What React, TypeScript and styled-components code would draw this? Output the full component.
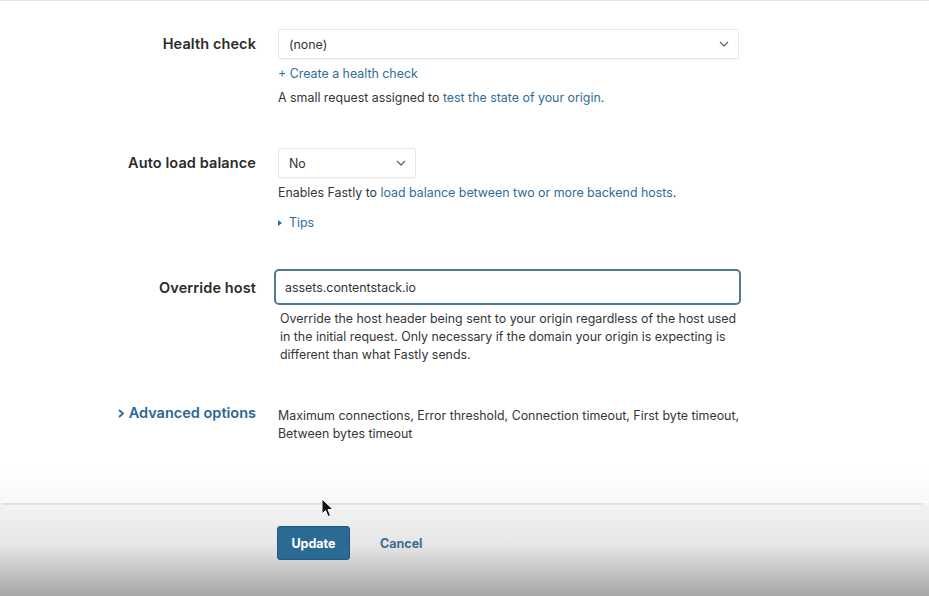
import React from "react";
import styled, { createGlobalStyle } from "styled-components";

const GlobalStyle = createGlobalStyle`
  html, body {
    margin: 0;
    padding: 0;
    background: #ffffff;
  }
  body {
    font-family: Inter, "Liberation Sans", Arial, sans-serif;
    color: #333;
  }
`;

const Page = styled.div`
    position: relative;
    width: 929px;
    height: 596px;
    overflow: hidden;
    display: flex;
    flex-direction: column;
    border-top: 1px solid #e4e4e4;
    box-sizing: border-box;
    background: linear-gradient(#ffffff 0%, #ffffff 78%, #f9f9f9 84%);
`;

const Form = styled.div`
    display: grid;
    grid-template-columns: 256px 462px;
    column-gap: 22px;
    padding-top: 28px;
    flex: 1;
    align-content: start;
`;

const Label = styled.div<{ $h: number }>`
    text-align: right;
    font-size: 14.5px;
    font-weight: 600;
    color: #2b2b2b;
    line-height: ${(p) => p.$h}px;
    letter-spacing: 0.1px;
`;

const Field = styled.div<{ $mb: number }>`
    display: flex;
    flex-direction: column;
    align-items: flex-start;
    margin-bottom: ${(p) => p.$mb}px;
`;

const Select = styled.div<{ $w: number }>`
    box-sizing: border-box;
    width: ${(p) => p.$w}px;
    height: 30px;
    border: 1px solid #e6e6e6;
    border-radius: 2px;
    background: #fff;
    display: flex;
    align-items: center;
    justify-content: space-between;
    padding: 0 9px 0 10px;
    font-size: 12.4px;
    color: #333;
    box-shadow: 0 1px 1px rgba(0, 0, 0, 0.03);
`;

const Input = styled.div`
    box-sizing: border-box;
    width: 467px;
    height: 36px;
    margin-left: -4px;
    border: 2px solid #4f7a96;
    border-radius: 5px;
    background: #fff;
    display: flex;
    align-items: center;
    padding: 1px 0 0 9px;
    font-size: 12.4px;
    color: #333;
`;

const Link = styled.span`
    color: #2f6c99;
`;

const Help = styled.div<{ $mt: number; $ml?: number }>`
    margin-top: ${(p) => p.$mt}px;
    margin-left: ${(p) => p.$ml ?? 0}px;
    font-size: 12.4px;
    line-height: 18px;
    color: #353535;
`;

const Toggle = styled.div<{ $mt: number }>`
    margin-top: ${(p) => p.$mt}px;
    font-size: 12.4px;
    line-height: 18px;
    color: #2f6c99;
    display: flex;
    align-items: center;
    gap: 7px;
`;

const AdvancedLabel = styled.div`
    align-self: start;
    font-size: 14.5px;
    font-weight: 600;
    color: #2a6792;
    line-height: 18px;
    margin-top: -2px;
    display: flex;
    justify-content: flex-end;
    align-items: center;
    gap: 5px;
`;

const FooterShade = styled.div`
    background: linear-gradient(#f3f3f3 0%, #e6e6e6 45%, #c4c4c4 75%, #a6a6a6 100%);
`;

const Footer = styled.div`
    box-sizing: border-box;
    height: 93px;
    margin: 0 7px 0 2px;
    border-top: 2px solid #e2e2e2;
    display: flex;
    align-items: flex-start;
    padding: 21px 0 0 275px;
    gap: 30px;
`;

const PrimaryButton = styled.button`
    height: 34px;
    width: 73px;
    padding: 0;
    border: 1px solid #1f5a80;
    border-radius: 3px;
    background: #2b6a93;
    color: #fff;
    font-family: inherit;
    font-size: 12.5px;
    font-weight: 700;
`;

const TextButton = styled.button`
    height: 34px;
    padding: 0;
    border: none;
    background: transparent;
    color: #3b6d92;
    font-family: inherit;
    font-size: 12.5px;
    font-weight: 700;
`;

const Cursor = styled.svg`
    position: absolute;
    left: 321px;
    top: 497px;
`;

const Chevron = () => (
  <svg width="10" height="6" viewBox="0 0 10 6">
    <path d="M1 1 L5 5 L9 1" fill="none" stroke="#666" strokeWidth="1.3" />
  </svg>
);

const App: React.FC = () => (
  <>
    <GlobalStyle />
    <Page>
      <Form>
        <Label $h={30}>Health check</Label>
        <Field $mb={41}>
          <Select $w={461}>
            (none)
            <Chevron />
          </Select>
          <Help $mt={6}>
            <Link>+ Create a health check</Link>
          </Help>
          <Help $mt={6}>
            A small request assigned to <Link>test the state of your origin</Link>.
          </Help>
        </Field>

        <Label $h={30}>Auto load balance</Label>
        <Field $mb={37}>
          <Select $w={138}>
            No
            <Chevron />
          </Select>
          <Help $mt={6}>
            Enables Fastly to <Link>load balance between two or more backend hosts</Link>.
          </Help>
          <Toggle $mt={12}>
            <svg width="4" height="6" viewBox="0 0 4 6">
              <path d="M0 0 L4 3 L0 6 Z" fill="#2f6c99" />
            </svg>
            Tips
          </Toggle>
        </Field>

        <Label $h={37}>Override host</Label>
        <Field $mb={42}>
          <Input>assets.contentstack.io</Input>
          <Help $mt={5} $ml={2}>
            Override the host header being sent to your origin regardless of the host used
            in the initial request. Only necessary if the domain your origin is expecting is
            different than what Fastly sends.
          </Help>
        </Field>

        <AdvancedLabel>
          <svg width="6" height="9" viewBox="0 0 6 9">
            <path d="M1 1 L5 4.5 L1 8" fill="none" stroke="#2a6792" strokeWidth="1.8" />
          </svg>
          Advanced options
        </AdvancedLabel>
        <Field $mb={0}>
          <Help $mt={1}>
            Maximum connections, Error threshold, Connection timeout, First byte timeout,
            Between bytes timeout
          </Help>
        </Field>
      </Form>

      <FooterShade>
        <Footer>
          <PrimaryButton>Update</PrimaryButton>
          <TextButton>Cancel</TextButton>
        </Footer>
      </FooterShade>

      <Cursor width="13" height="21" viewBox="0 0 13 21">
        <path d="M1 1 L1 16 L4.5 12.5 L7 18.5 L9.5 17.5 L7 11.5 L12 11.5 Z" fill="#111" stroke="#fff" strokeWidth="1" />
      </Cursor>
    </Page>
  </>
);

export default App;
